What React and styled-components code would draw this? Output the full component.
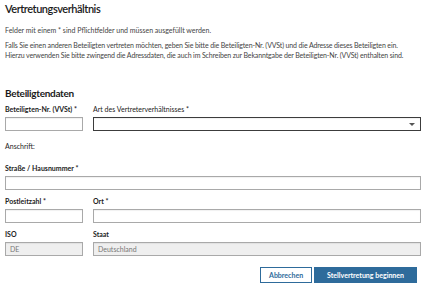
import React from 'react'
import styled, { createGlobalStyle } from 'styled-components'

const Global = createGlobalStyle`
    html, body {
        margin: 0;
        padding: 0;
        background: #fff;
    }
    body {
        font-family: Lato, "Noto Sans", sans-serif;
        color: #333;
    }
`

const Page = styled.div`
    width: 416px;
    padding: 0 4px 0 5px;
`

const Title = styled.h1`
    margin: 0;
    padding-top: 2px;
    font-size: 11px;
    line-height: 14px;
    font-weight: 600;
    letter-spacing: -0.45px;
    color: #1b1b1b;
`

const Note = styled.p`
    margin: ${props => props.top || 0}px 0 0;
    font-size: 7px;
    line-height: 10px;
    letter-spacing: ${props => (props.tight ? '-0.13px' : '0')};
    color: #444;
`

const Section = styled.h2`
    margin: 27px 0 0;
    font-size: 10px;
    line-height: 12px;
    font-weight: 700;
    letter-spacing: -0.3px;
    color: #1b1b1b;
`

const Row = styled.div`
    display: grid;
    grid-template-columns: ${props => props.cols || '1fr'};
    column-gap: 10px;
    margin-top: ${props => props.top || 0}px;
`

const Field = styled.div`
    display: flex;
    flex-direction: column;
`

const Label = styled.label`
    font-size: 7px;
    line-height: 10px;
    font-weight: ${props => (props.light ? 400 : 700)};
    color: #222;
    margin-bottom: 3px;
`

const Plain = styled.div`
    margin-top: ${props => props.top || 0}px;
    font-size: 7px;
    line-height: 10px;
    color: #222;
`

const Input = styled.div`
    box-sizing: border-box;
    height: 14px;
    border: 1px solid ${props => (props.dark ? '#3c3c3c' : '#a9a9a9')};
    background: ${props => (props.disabled ? '#efefef' : '#fff')};
    box-shadow: inset 0 1px 1px rgba(0, 0, 0, 0.06);
    font-size: 7px;
    line-height: 12px;
    padding: 0 4px;
    color: #777;
    display: flex;
    align-items: center;
    justify-content: space-between;
`

const Caret = styled.span`
    width: 0;
    height: 0;
    border-left: 3px solid transparent;
    border-right: 3px solid transparent;
    border-top: 3px solid #555;
    margin-right: 1px;
`

const Actions = styled.div`
    display: flex;
    justify-content: flex-end;
    gap: 2px;
    margin-top: 11px;
    padding-right: 4px;
`

const Button = styled.button`
    box-sizing: border-box;
    height: 16px;
    padding: 0 ${props => (props.primary ? 12 : 8)}px;
    font-family: inherit;
    font-size: 7px;
    font-weight: 700;
    border: 1px solid #2e6b9b;
    background: ${props => (props.primary ? '#2e6b9b' : '#fff')};
    color: ${props => (props.primary ? '#fff' : '#2e6b9b')};
    cursor: pointer;
`

const App = () => {
    return (
        <Page>
            <Global />
            <Title>Vertretungsverhältnis</Title>
            <Note top={9}>Felder mit einem * sind Pflichtfelder und müssen ausgefüllt werden.</Note>
            <Note top={5} tight>
                Falls Sie einen anderen Beteiligten vertreten möchten, geben Sie bitte die Beteiligten-Nr. (VVSt) und die Adresse dieses Beteiligten ein.
                <br />
                Hierzu verwenden Sie bitte zwingend die Adressdaten, die auch im Schreiben zur Bekanntgabe der Beteiligten-Nr. (VVSt) enthalten sind.
            </Note>
            <Section>Beteiligtendaten</Section>
            <Row cols="78px 1fr" top={5}>
                <Field>
                    <Label>Beteiligten-Nr. (VVSt) *</Label>
                    <Input />
                </Field>
                <Field>
                    <Label light>Art des Vertreterverhältnisses *</Label>
                    <Input dark>
                        <span />
                        <Caret />
                    </Input>
                </Field>
            </Row>
            <Plain top={10}>Anschrift:</Plain>
            <Row top={12}>
                <Field>
                    <Label>Straße / Hausnummer *</Label>
                    <Input />
                </Field>
            </Row>
            <Row cols="78px 1fr" top={6}>
                <Field>
                    <Label>Postleitzahl *</Label>
                    <Input />
                </Field>
                <Field>
                    <Label>Ort *</Label>
                    <Input />
                </Field>
            </Row>
            <Row cols="78px 1fr" top={6}>
                <Field>
                    <Label>ISO</Label>
                    <Input disabled>DE</Input>
                </Field>
                <Field>
                    <Label>Staat</Label>
                    <Input disabled>Deutschland</Input>
                </Field>
            </Row>
            <Actions>
                <Button>Abbrechen</Button>
                <Button primary>Stellvertretung beginnen</Button>
            </Actions>
        </Page>
    )
}

export default App
